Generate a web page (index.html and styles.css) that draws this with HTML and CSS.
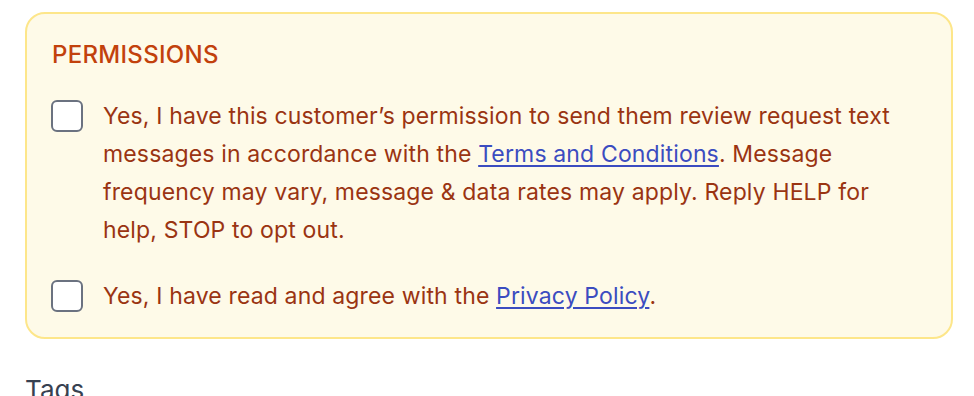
FILE: index.html
```html
<!DOCTYPE html>
<html lang="en">
<head>
    <meta charset="UTF-8">
    <meta name="viewport" content="width=device-width, initial-scale=1.0">
    <title>Permissions</title>
    <link rel="stylesheet" href="styles.css">
</head>
<body>
    <div class="page">
        <section class="permissions">
            <h2 class="permissions-title">PERMISSIONS</h2>
            <label class="consent">
                <span class="checkbox"></span>
                <span class="consent-text">Yes, I have this customer’s permission to send them review request text messages in accordance with the <a href="#">Terms and Conditions</a>. Message frequency may vary, message &amp; data rates may apply. Reply HELP for help, STOP to opt out.</span>
            </label>
            <label class="consent">
                <span class="checkbox"></span>
                <span class="consent-text">Yes, I have read and agree with the <a href="#">Privacy Policy</a>.</span>
            </label>
        </section>
        <h3 class="section-label">Tags</h3>
    </div>
</body>
</html>
```

FILE: styles.css
```css
body {
    margin: 0;
    padding: 0;
    font-family: Inter, "Noto Sans", sans-serif;
    background-color: #ffffff;
}

.page {
    padding: 12px 21px 0 25px;
}

/* Permissions card */
.permissions {
    background-color: #fefae8;
    border: 2px solid #fde68a;
    border-radius: 20px;
    padding: 26px 25px 22px 24px;
}

.permissions-title {
    margin: 0 0 27px 1px;
    font-size: 24px;
    font-weight: 500;
    letter-spacing: 0.3px;
    color: #c2410c;
    line-height: 30px;
}

.consent {
    display: flex;
    align-items: flex-start;
    gap: 20px;
    color: #9a3412;
    font-size: 23px;
    letter-spacing: 0.15px;
    line-height: 38px;
    cursor: pointer;
}

.consent + .consent {
    margin-top: 28px;
}

.checkbox {
    flex: none;
    width: 28px;
    height: 28px;
    margin-top: 3px;
    border: 2px solid #6b7280;
    border-radius: 6px;
    background-color: #ffffff;
}

.consent-text a {
    color: #3b4cc0;
    text-decoration: underline;
    text-decoration-thickness: 2px;
    text-underline-offset: 3px;
}

.section-label {
    margin: 35px 0 0 0;
    font-size: 26px;
    font-weight: 400;
    color: #374151;
}
```
